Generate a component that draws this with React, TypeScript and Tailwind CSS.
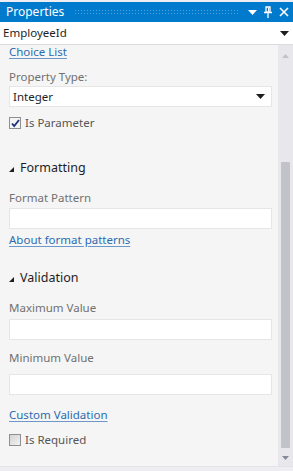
import React from "react";

const font = "font-['Segoe_UI','Noto_Sans','Open_Sans',sans-serif]";

function Caret({ className = "" }: { className?: string }) {
  return (
    <svg width="9" height="5" viewBox="0 0 9 5" className={className}>
      <path d="M0 0h9L4.5 5z" fill="currentColor" />
    </svg>
  );
}

function SectionHeader({ title }: { title: string }) {
  return (
    <div className="flex items-center gap-[6px] h-[20px] text-[12.5px] text-[#1e1e1e]">
      <svg width="5" height="5" viewBox="0 0 5 5" className="mt-[2px]">
        <path d="M5 0v5H0z" fill="#1e1e1e" />
      </svg>
      <span>{title}</span>
    </div>
  );
}

function Label({ children }: { children: React.ReactNode }) {
  return <div className="h-[18px] leading-[18px] text-[11.5px] text-[#717171]">{children}</div>;
}

function TextBox() {
  return <div className="h-[21px] bg-white border border-[#e6e6e6]" />;
}

function Link({ children }: { children: React.ReactNode }) {
  return (
    <div className="h-[18px] leading-[18px] text-[11.5px] text-[#2b6cb0] underline underline-offset-2 decoration-[#6b98c9]">
      {children}
    </div>
  );
}

function Check({ checked, label }: { checked?: boolean; label: string }) {
  return (
    <div className="flex items-center gap-[4px] h-[16px] text-[11.5px] text-[#555]">
      <div
        className={
          "w-[12px] h-[12px] border border-[#8f8f8f] flex items-center justify-center " +
          (checked ? "bg-[#f4f4f4]" : "bg-gradient-to-br from-[#d4d4d4] to-[#f2f2f2]")
        }
      >
        {checked && (
          <svg width="9" height="9" viewBox="0 0 9 9">
            <path d="M1 4.5l2.2 2.6L8 1" stroke="#1f2f7a" strokeWidth="1.8" fill="none" />
          </svg>
        )}
      </div>
      <span>{label}</span>
    </div>
  );
}

export default function App() {
  return (
    <div className={`w-[293px] h-[471px] bg-[#eeeef2] flex flex-col ${font}`}>
      {/* title bar */}
      <div className="mt-[2px] h-[20px] bg-[#007acc] flex items-center pl-[6px] pr-[4px] text-white">
        <span className="text-[12px] leading-none">Properties</span>
        <div className="ml-[10px] flex-1 h-[6px] bg-[radial-gradient(#4fa3dc_0.7px,transparent_0.9px)] bg-[length:3px_3px]" />
        <Caret className="ml-[8px] text-white" />
        <svg width="10" height="12" viewBox="0 0 10 12" className="ml-[6px]">
          <path d="M3 1h4v5H3zM1 6.5h8M5 7v5" stroke="white" strokeWidth="1.3" fill="none" />
          <path d="M5.5 1.5v4" stroke="white" strokeWidth="1" />
        </svg>
        <svg width="10" height="10" viewBox="0 0 10 10" className="ml-[6px]">
          <path d="M1 1l8 8M9 1L1 9" stroke="white" strokeWidth="1.6" />
        </svg>
      </div>

      {/* object selector */}
      <div className="h-[23px] bg-white border-b border-[#dcdce0] flex items-center pl-[3px] pr-[4px] text-[11.5px] text-[#1e1e1e]">
        <span className="flex-1">EmployeeId</span>
        <Caret className="text-[#1e1e1e]" />
      </div>

      {/* body */}
      <div className="flex-1 flex bg-[#f5f5f5] border-b border-[#e4e4e8] mb-[4px] min-h-0">
        <div className="flex-1 px-[9px] pr-[6px] flex flex-col">
          <div className="mt-[-2px]">
            <Link>Choice List</Link>
          </div>
          <div className="mt-[7px]">
            <Label>Property Type:</Label>
          </div>
          <div className="h-[21px] bg-white border border-[#e6e6e6] flex items-center pl-[3px] pr-[6px] text-[11.5px] text-[#1e1e1e]">
            <span className="flex-1">Integer</span>
            <Caret />
          </div>
          <div className="mt-[8px]">
            <Check checked label="Is Parameter" />
          </div>

          <div className="mt-[27px]">
            <SectionHeader title="Formatting" />
          </div>
          <div className="mt-[11px]">
            <Label>Format Pattern</Label>
          </div>
          <div className="mt-[1px]">
            <TextBox />
          </div>
          <div className="mt-[2px]">
            <Link>About format patterns</Link>
          </div>

          <div className="mt-[19px]">
            <SectionHeader title="Validation" />
          </div>
          <div className="mt-[11px]">
            <Label>Maximum Value</Label>
          </div>
          <div className="mt-[2px]">
            <TextBox />
          </div>
          <div className="mt-[9px]">
            <Label>Minimum Value</Label>
          </div>
          <div className="mt-[7px]">
            <TextBox />
          </div>
          <div className="mt-[11px]">
            <Link>Custom Validation</Link>
          </div>
          <div className="mt-[8px]">
            <Check label="Is Required" />
          </div>
        </div>

        {/* scrollbar */}
        <div className="w-[15px] bg-[#e8e8ec] flex flex-col items-center">
          <svg width="7" height="4" viewBox="0 0 7 4" className="mt-[9px]">
            <path d="M0 4h7L3.5 0z" fill="#c2c3c9" />
          </svg>
          <div className="mt-[104px] w-[9px] flex-1 bg-[#c2c3c9] rounded-[1px]" />
          <svg width="7" height="4" viewBox="0 0 7 4" className="mt-[8px] mb-[6px]">
            <path d="M0 0h7L3.5 4z" fill="#868999" />
          </svg>
        </div>
      </div>
    </div>
  );
}
